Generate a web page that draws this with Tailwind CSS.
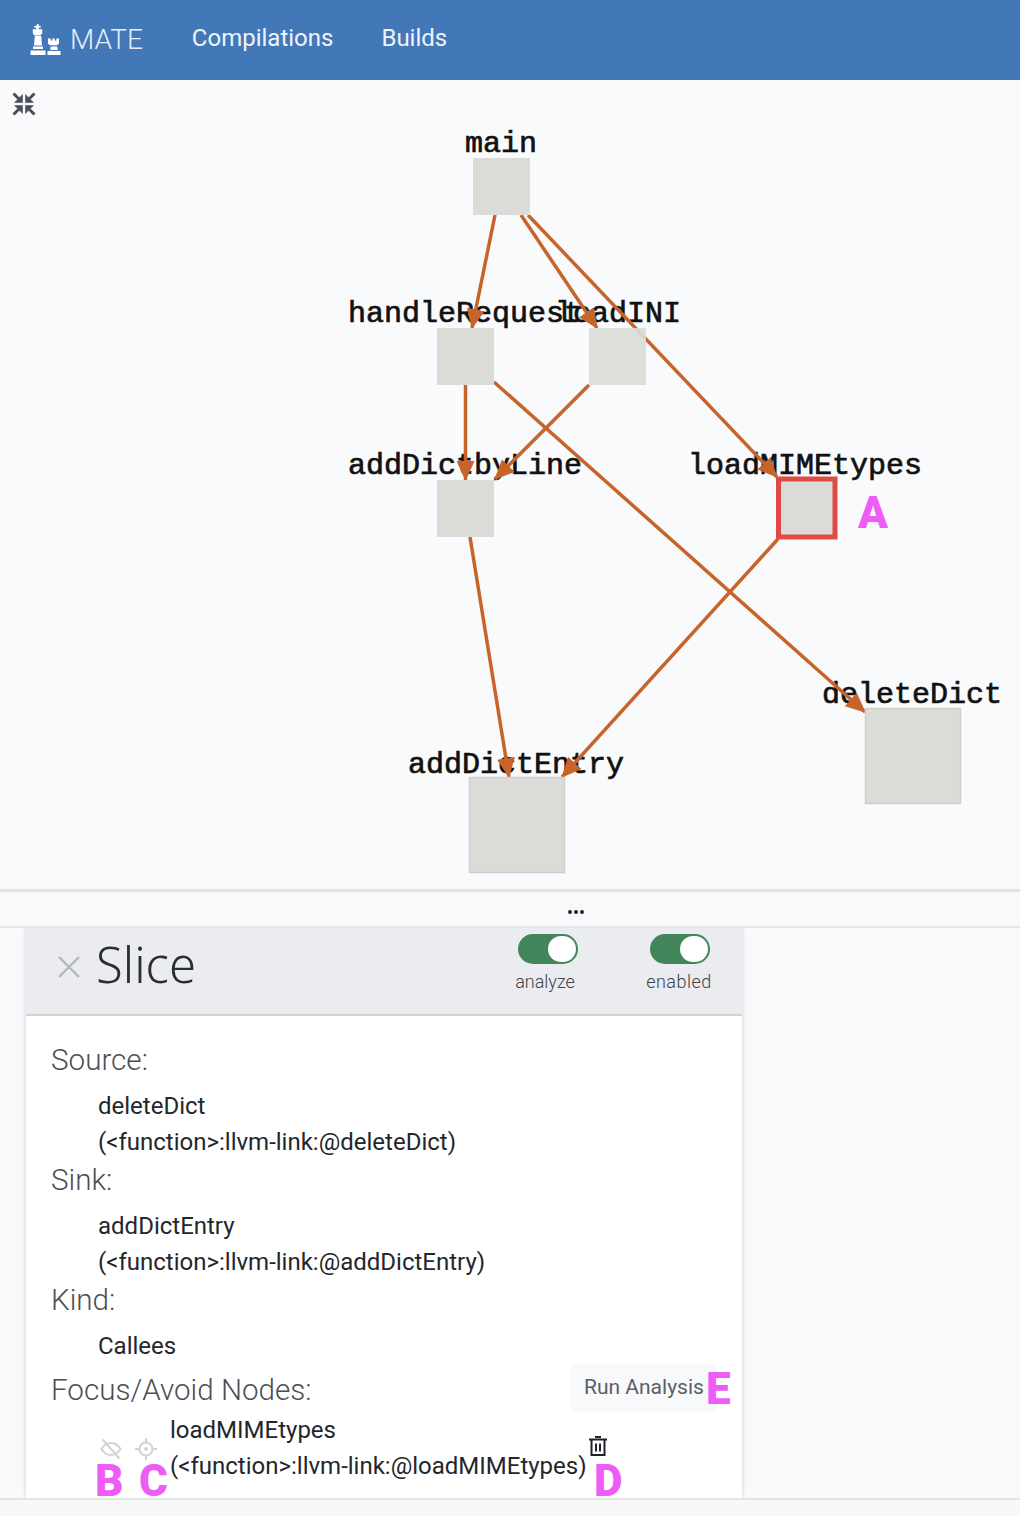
<!DOCTYPE html>
<html lang="en">
<head>
  <meta charset="UTF-8" />
  <title>MATE</title>
  <script src="https://cdn.jsdelivr.net/npm/@tailwindcss/browser@4"></script>
</head>
<body class="relative h-[1516px] overflow-hidden bg-[#f9fafc] font-['Roboto',sans-serif] text-[#1f2329]">

  <!-- Navbar -->
  <header class="flex h-20 items-center bg-[#4278b8] pl-[30px] text-white">
    <svg class="h-[32px] w-[32px]" viewBox="0 0 32 32" fill="#fff">
      <path d="M7.2 0h1.600v2h2v1.600h-2v1.600h3.400v4.400l-1.800 1.800h-5.800l-1.800-1.800v-4.400h3.400v-1.600h-2v-1.600h2z" />
      <path d="M4.800 12h6.400l.8 9.600h-8z" />
      <path d="M3 22.500h10v2.500h-10z" />
      <path d="M.5 26.500h15v4.500h-15z" />
      <path d="M18 14.500h2.600v2h1.700v-2h2.400v2h1.700v-2h2.600v5l-1.800 1.800h-7.400l-1.800-1.800z" />
      <path d="M20.800 22.500h6.400l.6 3.500h-7.600z" />
      <path d="M17.500 27h13v4h-13z" />
    </svg>
    <span class="ml-[8px] text-[28px] font-light leading-none text-[#e6eef8]">MATE</span>
    <nav class="-mt-[4px] ml-[49px] flex gap-[48px] text-[24px] text-[#eef3fa]">
      <a>Compilations</a>
      <a>Builds</a>
    </nav>
  </header>

  <!-- Call graph -->
  <section class="relative h-[809px]">
    <svg class="absolute left-[12px] top-[12px] h-[24px] w-[24px]" viewBox="0 0 24 24" fill="#4b5058" stroke="#4b5058" stroke-width="3">
      <path d="M1.500 1.500l5 5M22.500 1.500l-5 5M1.500 22.500l5-5M22.500 22.500l-5-5" />
      <path stroke="none" d="M10.800 10.800h-8.800l8.800-8.800zM13.200 10.800h8.800l-8.800-8.800zM10.800 13.200h-8.800l8.800 8.800zM13.200 13.200h8.800l-8.800 8.800z" />
    </svg>

    <svg class="absolute left-0 top-0" width="1020" height="809" viewBox="0 80 1020 809">
      <defs>
        <marker id="arrow" markerUnits="userSpaceOnUse" markerWidth="20" markerHeight="18" refX="19" refY="9" orient="auto">
          <path d="M0 0L20 9L0 18z" fill="#c8642a" />
        </marker>
      </defs>

      <g font-family="'Liberation Mono', monospace" font-size="30" fill="#111" stroke="#111" stroke-width="0.7">
        <text x="465" y="152">main</text>
        <text x="348" y="322">handleRequest</text>
        <text x="555" y="322">loadINI</text>
        <text x="348" y="474">addDictbyLine</text>
        <text x="688" y="474">loadMIMEtypes</text>
        <text x="822" y="703">deleteDict</text>
        <text x="408" y="773">addDictEntry</text>
      </g>

      <g stroke="#c8642a" stroke-width="3.500">
        <line x1="495" y1="215" x2="472" y2="328" marker-end="url(#arrow)" />
        <line x1="521" y1="215" x2="597" y2="328" marker-end="url(#arrow)" />
        <line x1="528" y1="215" x2="777" y2="477" marker-end="url(#arrow)" />
        <line x1="465.500" y1="385" x2="465.500" y2="480" marker-end="url(#arrow)" />
        <line x1="589" y1="385" x2="495" y2="479" marker-end="url(#arrow)" />
        <line x1="494" y1="382" x2="865" y2="712" marker-end="url(#arrow)" />
        <line x1="470" y1="537" x2="509" y2="777" marker-end="url(#arrow)" />
        <line x1="778" y1="539" x2="562" y2="777" marker-end="url(#arrow)" />
      </g>

      <g fill="#dbdcd7">
        <rect x="473" y="158" width="57" height="57" />
        <rect x="437" y="328" width="57" height="57" />
        <rect x="589" y="328" width="57" height="57" fill-opacity="0.92" />
        <rect x="437" y="480" width="57" height="57" />
        <rect x="778.500" y="479" width="56.500" height="58" stroke="#e04a45" stroke-width="5" />
        <rect x="865.500" y="708.500" width="95" height="95" stroke="#cfd0cc" stroke-width="1.500" />
        <rect x="469.500" y="777.500" width="95" height="95" stroke="#cfd0cc" stroke-width="1.500" />
      </g>
    </svg>
  </section>

  <!-- Resize handle -->
  <div class="relative h-[39px] border-y-[3px] border-b-2 border-t-[#e2e4e8] border-b-[#e2e4e8] bg-[#f8f9fb]">
    <div class="absolute left-[568px] top-[18px] flex gap-[2px]">
      <span class="h-[4px] w-[4px] rounded-full bg-[#22262b]"></span>
      <span class="h-[4px] w-[4px] rounded-full bg-[#22262b]"></span>
      <span class="h-[4px] w-[4px] rounded-full bg-[#22262b]"></span>
    </div>
  </div>

  <!-- Slice panel -->
  <div class="ml-[26px] h-[570px] w-[716px] overflow-hidden bg-white shadow-[0_0_5px_rgba(60,70,90,0.25)]">
    <div class="relative flex h-[88px] items-center border-b-2 border-[#d2d4d9] bg-[#ebecf0] pb-[12px] pl-[32px]">
      <svg class="mt-[3px] h-[22px] w-[22px]" viewBox="0 0 22 22" stroke="#b3b7b9" stroke-width="2.400">
        <path d="M1 1L21 21M21 1L1 21" />
      </svg>
      <h2 class="-mt-[2px] ml-[16px] font-['Noto_Sans',sans-serif] text-[49px] font-light leading-none text-[#2a2e33]">Slice</h2>

      <div class="absolute left-[492px] top-[6px] flex w-[60px] flex-col items-center">
        <div class="flex h-[30px] w-[60px] justify-end rounded-full bg-[#43855a] p-[2px]">
          <span class="h-[26px] w-[28px] rounded-full bg-white"></span>
        </div>
        <span class="mt-[7px] text-[18px] font-light leading-[22px] text-[#3d4248] -translate-x-[3px]">analyze</span>
      </div>
      <div class="absolute left-[624px] top-[6px] flex w-[60px] flex-col items-center">
        <div class="flex h-[30px] w-[60px] justify-end rounded-full bg-[#43855a] p-[2px]">
          <span class="h-[26px] w-[28px] rounded-full bg-white"></span>
        </div>
        <span class="mt-[7px] whitespace-nowrap text-[18px] font-light leading-[22px] tracking-[0.5px] text-[#3d4248] -translate-x-[1px]">enabled</span>
      </div>
    </div>

    <div class="pl-[25px] pt-[24px] text-[24px] leading-[36px] text-[#23272c]">
      <div class="h-[40px] text-[29.600px] font-light leading-[40px] text-[#4a4f55]">Source:</div>
      <div class="mt-[8px] pl-[47px]">deleteDict<br />(&lt;function&gt;:llvm-link:@deleteDict)</div>

      <div class="h-[40px] text-[29.600px] font-light leading-[40px] text-[#4a4f55]">Sink:</div>
      <div class="mt-[8px] pl-[47px]">addDictEntry<br />(&lt;function&gt;:llvm-link:@addDictEntry)</div>

      <div class="h-[40px] text-[29.600px] font-light leading-[40px] text-[#4a4f55]">Kind:</div>
      <div class="mt-[8px] pl-[47px]">Callees</div>

      <div class="mt-[6px] flex h-[40px] items-center justify-between pr-[24px]">
        <span class="text-[29.600px] font-light text-[#4a4f55]">Focus/Avoid Nodes:</span>
        <button class="-mt-[4px] flex h-[48px] w-[148px] items-center rounded-[6px] bg-[#f8f9fb] pb-[2px] pl-[14px] text-[21px] text-[#5a5f65]">Run Analysis</button>
      </div>

      <div class="mt-[2px] flex pl-[49px]">
        <div class="mt-[26px] flex gap-[13px]">
          <svg class="h-[22px] w-[22px]" viewBox="0 0 22 22" fill="none" stroke="#cfd3d7" stroke-width="2">
            <path d="M1.500 11c2.500-4 5.500-6 9.500-6s7 2 9.500 6c-2.500 4-5.500 6-9.500 6s-7-2-9.500-6z" />
            <path d="M2.500 1.500L19.500 20.500" />
          </svg>
          <svg class="h-[22px] w-[22px]" viewBox="0 0 22 22" fill="none" stroke="#cfd3d7" stroke-width="2">
            <circle cx="11" cy="11" r="6.500" />
            <circle cx="11" cy="11" r="2" fill="#cfd3d7" stroke="none" />
            <path d="M11 0v4M11 18v4M0 11h4M18 11h4" />
          </svg>
        </div>
        <div class="ml-[13px] whitespace-nowrap">loadMIMEtypes<br />(&lt;function&gt;:llvm-link:@loadMIMEtypes)</div>
        <svg class="ml-[1px] mt-[24px] h-[20px] w-[20px]" viewBox="0 0 20 20" fill="none" stroke="#1f2329" stroke-width="2">
          <path d="M1 3.500h18M7 1h6" />
          <path d="M3.500 4v15h13v-15" />
          <path d="M8 7.500v8M12 7.500v8" />
        </svg>
      </div>
    </div>
  </div>

  <!-- Status bar -->
  <div class="absolute bottom-0 left-0 h-[18px] w-full border-t-2 border-[#e4e4e4] bg-[#f8f8f8]"></div>

  <!-- Annotations over the screenshot -->
  <span class="absolute left-[858px] top-[488px] text-[44px] font-black leading-[50px] text-[#ee5cf6]">A</span>
  <span class="absolute left-[95px] top-[1456px] text-[44px] font-black leading-[50px] text-[#ee5cf6]">B</span>
  <span class="absolute left-[139px] top-[1456px] text-[44px] font-black leading-[50px] text-[#ee5cf6]">C</span>
  <span class="absolute left-[594px] top-[1456px] text-[44px] font-black leading-[50px] text-[#ee5cf6]">D</span>
  <span class="absolute left-[706px] top-[1364px] text-[44px] font-black leading-[50px] text-[#ee5cf6]">E</span>

</body>
</html>
